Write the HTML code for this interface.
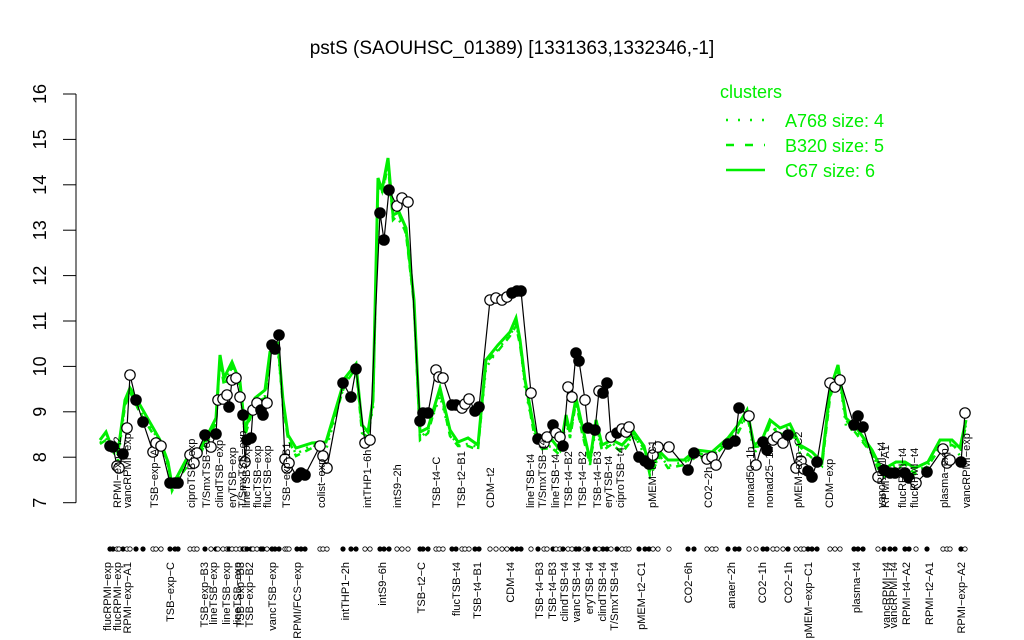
<!DOCTYPE html>
<html><head><meta charset="utf-8"><style>
html,body{margin:0;padding:0;background:#fff;}
svg{display:block;font-family:"Liberation Sans",sans-serif;}
</style></head><body>
<svg id="s" width="1024" height="640" viewBox="0 0 1024 640" xmlns="http://www.w3.org/2000/svg">
<rect width="1024" height="640" fill="#fff"/>
<text x="512" y="54" font-size="19" text-anchor="middle">pstS (SAOUHSC_01389) [1331363,1332346,-1]</text>
<g stroke="#000" stroke-width="1">
<line x1="76" y1="94" x2="76" y2="502.7"/>
<line x1="63" y1="94" x2="76" y2="94"/><line x1="63" y1="139.4" x2="76" y2="139.4"/>
<line x1="63" y1="184.8" x2="76" y2="184.8"/><line x1="63" y1="230.2" x2="76" y2="230.2"/>
<line x1="63" y1="275.6" x2="76" y2="275.6"/><line x1="63" y1="321" x2="76" y2="321"/>
<line x1="63" y1="366.4" x2="76" y2="366.4"/><line x1="63" y1="411.8" x2="76" y2="411.8"/>
<line x1="63" y1="457.2" x2="76" y2="457.2"/><line x1="63" y1="502.7" x2="76" y2="502.7"/>
</g>
<g font-size="18" text-anchor="middle">
<text transform="translate(46,94) rotate(-90)">16</text>
<text transform="translate(46,139.4) rotate(-90)">15</text>
<text transform="translate(46,184.8) rotate(-90)">14</text>
<text transform="translate(46,230.2) rotate(-90)">13</text>
<text transform="translate(46,275.6) rotate(-90)">12</text>
<text transform="translate(46,321) rotate(-90)">11</text>
<text transform="translate(46,366.4) rotate(-90)">10</text>
<text transform="translate(46,411.8) rotate(-90)">9</text>
<text transform="translate(46,457.2) rotate(-90)">8</text>
<text transform="translate(46,502.7) rotate(-90)">7</text>
</g>
<g fill="#00ee00" font-size="18">
<text x="720" y="98">clusters</text>
<text x="785" y="127">A768 size: 4</text>
<text x="785" y="152">B320 size: 5</text>
<text x="785" y="177">C67 size: 6</text>
</g>
<g stroke="#00ee00" stroke-width="2.5">
<line x1="726" y1="120" x2="765" y2="120" stroke-dasharray="2,10"/>
<line x1="726" y1="145" x2="765" y2="145" stroke-dasharray="8,11"/>
<line x1="726" y1="170" x2="765" y2="170"/>
</g>
<g id="green" fill="none" stroke="#00ee00"></g>
<g id="pts"></g>
<g font-size="11" id="toplab">
<text transform="translate(121,508) rotate(-90)">RPMI−exp−A2</text>
<text transform="translate(131,508) rotate(-90)">vancRPMI−exp</text>
<text transform="translate(158,508) rotate(-90)">TSB−exp−A</text>
<text transform="translate(195,508) rotate(-90)">ciproTSB−exp</text>
<text transform="translate(210,508) rotate(-90)">T/SmxTSB−exp</text>
<text transform="translate(223,508) rotate(-90)">clindTSB−exp</text>
<text transform="translate(236,508) rotate(-90)">eryTSB−exp</text>
<text transform="translate(246,508) rotate(-90)">T/SmxTSB−exp</text>
<text transform="translate(250,508) rotate(-90)">lineTSB−exp</text>
<text transform="translate(261,508) rotate(-90)">flucTSB−exp</text>
<text transform="translate(271,508) rotate(-90)">flucTSB−exp</text>
<text transform="translate(290,508) rotate(-90)">TSB−exp−B1</text>
<text transform="translate(325,508) rotate(-90)">colist−exp</text>
<text transform="translate(371,508) rotate(-90)">intTHP1−6h</text>
<text transform="translate(401,508) rotate(-90)">intS9−2h</text>
<text transform="translate(440,508) rotate(-90)">TSB−t4−C</text>
<text transform="translate(465,508) rotate(-90)">TSB−t2−B1</text>
<text transform="translate(494,508) rotate(-90)">CDM−t2</text>
<text transform="translate(534,508) rotate(-90)">lineTSB−t4</text>
<text transform="translate(546,508) rotate(-90)">T/SmxTSB−t4</text>
<text transform="translate(559,508) rotate(-90)">lineTSB−t4</text>
<text transform="translate(572,508) rotate(-90)">TSB−t4−B2</text>
<text transform="translate(586,508) rotate(-90)">TSB−t4−B2</text>
<text transform="translate(601,508) rotate(-90)">TSB−t4−B3</text>
<text transform="translate(612,508) rotate(-90)">eryTSB−t4</text>
<text transform="translate(624,508) rotate(-90)">ciproTSB−t4</text>
<text transform="translate(656,508) rotate(-90)">pMEM−t4−C1</text>
<text transform="translate(712,508) rotate(-90)">CO2−2h</text>
<text transform="translate(754,508) rotate(-90)">nonad50−1h</text>
<text transform="translate(773,508) rotate(-90)">nonad25−1h</text>
<text transform="translate(802,508) rotate(-90)">pMEM−exp−C2</text>
<text transform="translate(833,508) rotate(-90)">CDM−exp</text>
<text transform="translate(885,508) rotate(-90)">vancRPMI−t4</text>
<text transform="translate(889,508) rotate(-90)">RPMI−t4−A1</text>
<text transform="translate(906,508) rotate(-90)">flucRPMI−t4</text>
<text transform="translate(918,508) rotate(-90)">flucRPMI−t4</text>
<text transform="translate(948,508) rotate(-90)">plasma−exp</text>
<text transform="translate(970,508) rotate(-90)">vancRPMI−exp</text>
</g>
<g font-size="11" text-anchor="end">
<text transform="translate(111,562) rotate(-90)">flucRPMI−exp</text>
<text transform="translate(121,562) rotate(-90)">flucRPMI−exp</text>
<text transform="translate(131,562) rotate(-90)">RPMI−exp−A1</text>
<text transform="translate(174,562) rotate(-90)">TSB−exp−C</text>
<text transform="translate(208,562) rotate(-90)">TSB−exp−B3</text>
<text transform="translate(217,562) rotate(-90)">lineTSB−exp</text>
<text transform="translate(230,562) rotate(-90)">lineTSB−exp</text>
<text transform="translate(241,562) rotate(-90)">lineTSB−exp</text>
<text transform="translate(244,562) rotate(-90)">TSB−exp−B3</text>
<text transform="translate(253,562) rotate(-90)">TSB−exp−B2</text>
<text transform="translate(276,562) rotate(-90)">vancTSB−exp</text>
<text transform="translate(301,562) rotate(-90)">RPMI/FCS−exp</text>
<text transform="translate(349,562) rotate(-90)">intTHP1−2h</text>
<text transform="translate(386,562) rotate(-90)">intS9−6h</text>
<text transform="translate(425,562) rotate(-90)">TSB−t2−C</text>
<text transform="translate(460,562) rotate(-90)">flucTSB−t4</text>
<text transform="translate(481,562) rotate(-90)">TSB−t4−B1</text>
<text transform="translate(514,562) rotate(-90)">CDM−t4</text>
<text transform="translate(543,562) rotate(-90)">TSB−t4−B3</text>
<text transform="translate(556,562) rotate(-90)">TSB−t4−B3</text>
<text transform="translate(568,562) rotate(-90)">clindTSB−t4</text>
<text transform="translate(580,562) rotate(-90)">vancTSB−t4</text>
<text transform="translate(593,562) rotate(-90)">eryTSB−t4</text>
<text transform="translate(606,562) rotate(-90)">clindTSB−t4</text>
<text transform="translate(618,562) rotate(-90)">T/SmxTSB−t4</text>
<text transform="translate(645,562) rotate(-90)">pMEM−t2−C1</text>
<text transform="translate(692,562) rotate(-90)">CO2−6h</text>
<text transform="translate(735,562) rotate(-90)">anaer−2h</text>
<text transform="translate(766,562) rotate(-90)">CO2−1h</text>
<text transform="translate(792,562) rotate(-90)">CO2−1h</text>
<text transform="translate(812,562) rotate(-90)">pMEM−exp−C1</text>
<text transform="translate(860,562) rotate(-90)">plasma−t4</text>
<text transform="translate(890,562) rotate(-90)">vancRPMI−t4</text>
<text transform="translate(897,562) rotate(-90)">vancRPMI−t4</text>
<text transform="translate(910,562) rotate(-90)">RPMI−t4−A2</text>
<text transform="translate(933,562) rotate(-90)">RPMI−t2−A1</text>
<text transform="translate(965,562) rotate(-90)">RPMI−exp−A2</text>
</g>
</svg>
<script>
var P=[[110,446,1],[113,447,1],[117,466,0],[119,468,0],[123,454,1],[127,428,0],[130,375,0],[136,400,1],[143,422,1],[153,452,0],[156,443,0],[161,446,0],[170,483,1],[175,483,1],[178,483,1],[190,455,0],[194,463,0],[197,453,0],[205,435,1],[211,447,0],[216,434,1],[218,400,0],[223,399,0],[227,395,0],[229,407,1],[232,380,0],[236,378,0],[240,397,0],[243,415,1],[245,462,0],[247,440,1],[251,438,1],[253,410,0],[257,403,0],[261,410,1],[263,415,1],[267,403,0],[272,345,1],[275,349,1],[279,335,1],[285,459,0],[287,468,0],[289,463,0],[297,477,1],[301,473,1],[305,475,1],[320,446,0],[323,456,0],[327,468,0],[343,383,1],[351,397,1],[356,369,1],[365,443,0],[370,440,0],[380,213,1],[384,240,1],[389,190,1],[397,206,0],[402,198,0],[408,202,0],[420,421,1],[423,413,1],[428,413,1],[436,370,0],[439,377,0],[443,378,0],[452,405,1],[456,405,1],[462,408,0],[465,404,0],[469,399,0],[475,411,1],[479,407,1],[490,300,0],[496,298,0],[502,300,0],[507,297,0],[512,293,1],[517,291,1],[521,291,1],[531,393,0],[538,439,1],[544,443,0],[547,437,0],[553,425,1],[556,433,0],[560,437,0],[563,446,1],[568,387,0],[572,397,0],[576,353,1],[579,361,1],[585,400,0],[588,428,1],[595,430,1],[599,391,0],[603,393,1],[607,383,1],[611,437,0],[617,433,1],[622,429,0],[626,432,0],[629,427,0],[639,457,1],[645,461,1],[649,464,1],[653,455,0],[658,447,0],[669,447,0],[688,470,1],[694,453,1],[707,459,0],[712,457,0],[716,465,0],[728,444,1],[735,441,1],[739,408,1],[749,416,0],[756,465,0],[763,442,1],[767,450,1],[773,440,0],[777,437,0],[783,443,0],[788,435,1],[796,468,0],[801,461,0],[804,469,0],[808,471,1],[812,477,1],[817,462,1],[830,383,0],[835,387,0],[840,380,0],[854,425,1],[858,416,1],[863,427,1],[878,477,0],[884,470,1],[890,473,1],[895,473,1],[905,473,1],[909,478,1],[916,483,0],[927,472,1],[943,449,0],[947,463,0],[950,460,0],[961,462,1],[965,413,0]];
var G=[[100,440],[106,432],[112,448],[118,452],[125,400],[130,388],[140,405],[160,440],[168,462],[172,485],[178,475],[186,460],[200,450],[210,430],[216,418],[220,355],[224,378],[232,362],[240,382],[245,430],[255,398],[265,390],[270,352],[278,344],[283,400],[288,435],[296,448],[312,443],[326,442],[345,378],[356,364],[362,425],[368,432],[373,400],[378,178],[382,190],[388,158],[393,215],[399,212],[406,228],[414,300],[420,432],[428,428],[440,388],[450,430],[458,442],[468,438],[478,445],[486,360],[498,345],[510,332],[516,318],[520,340],[525,380],[534,428],[542,445],[552,440],[560,450],[566,415],[570,432],[576,398],[582,425],[590,460],[596,420],[602,445],[612,440],[622,445],[634,432],[644,446],[650,470],[660,452],[668,460],[684,460],[696,450],[712,452],[728,438],[738,425],[747,410],[754,445],[762,440],[770,420],[780,428],[790,424],[800,445],[812,452],[822,462],[830,390],[838,365],[846,418],[858,430],[872,450],[882,470],[896,462],[905,462],[915,468],[928,462],[940,440],[952,440],[960,448],[966,420]];
var ns="http://www.w3.org/2000/svg";
function mk(t,a,p){var e=document.createElementNS(ns,t);for(var k in a)e.setAttribute(k,a[k]);p.appendChild(e);return e;}
var g=document.getElementById('green');
function pl(off,dash,w){var s=G.map(function(q,i){return q[0]+','+(q[1]+off[i%off.length])}).join(' ');var a={points:s,'stroke-width':w};if(dash)a['stroke-dasharray']=dash;mk('polyline',a,g);}
pl([3,6,2,8,4],'2,6',2.5);
pl([4,8,5,2,6],'7,6',2.5);
pl([0],null,3);
var pt=document.getElementById('pts');
mk('polyline',{points:P.map(function(q){return q[0]+','+q[1]}).join(' '),fill:'none',stroke:'#000','stroke-width':1.2},pt);
P.forEach(function(q){mk('circle',{cx:q[0],cy:q[1],r:5.2,fill:q[2]?'#000':'#fff',stroke:'#000','stroke-width':1.2},pt);
mk('circle',{cx:q[0],cy:549,r:2.2,fill:q[2]?'#000':'#fff',stroke:'#000','stroke-width':0.8},pt);});
</script>
</body></html>
